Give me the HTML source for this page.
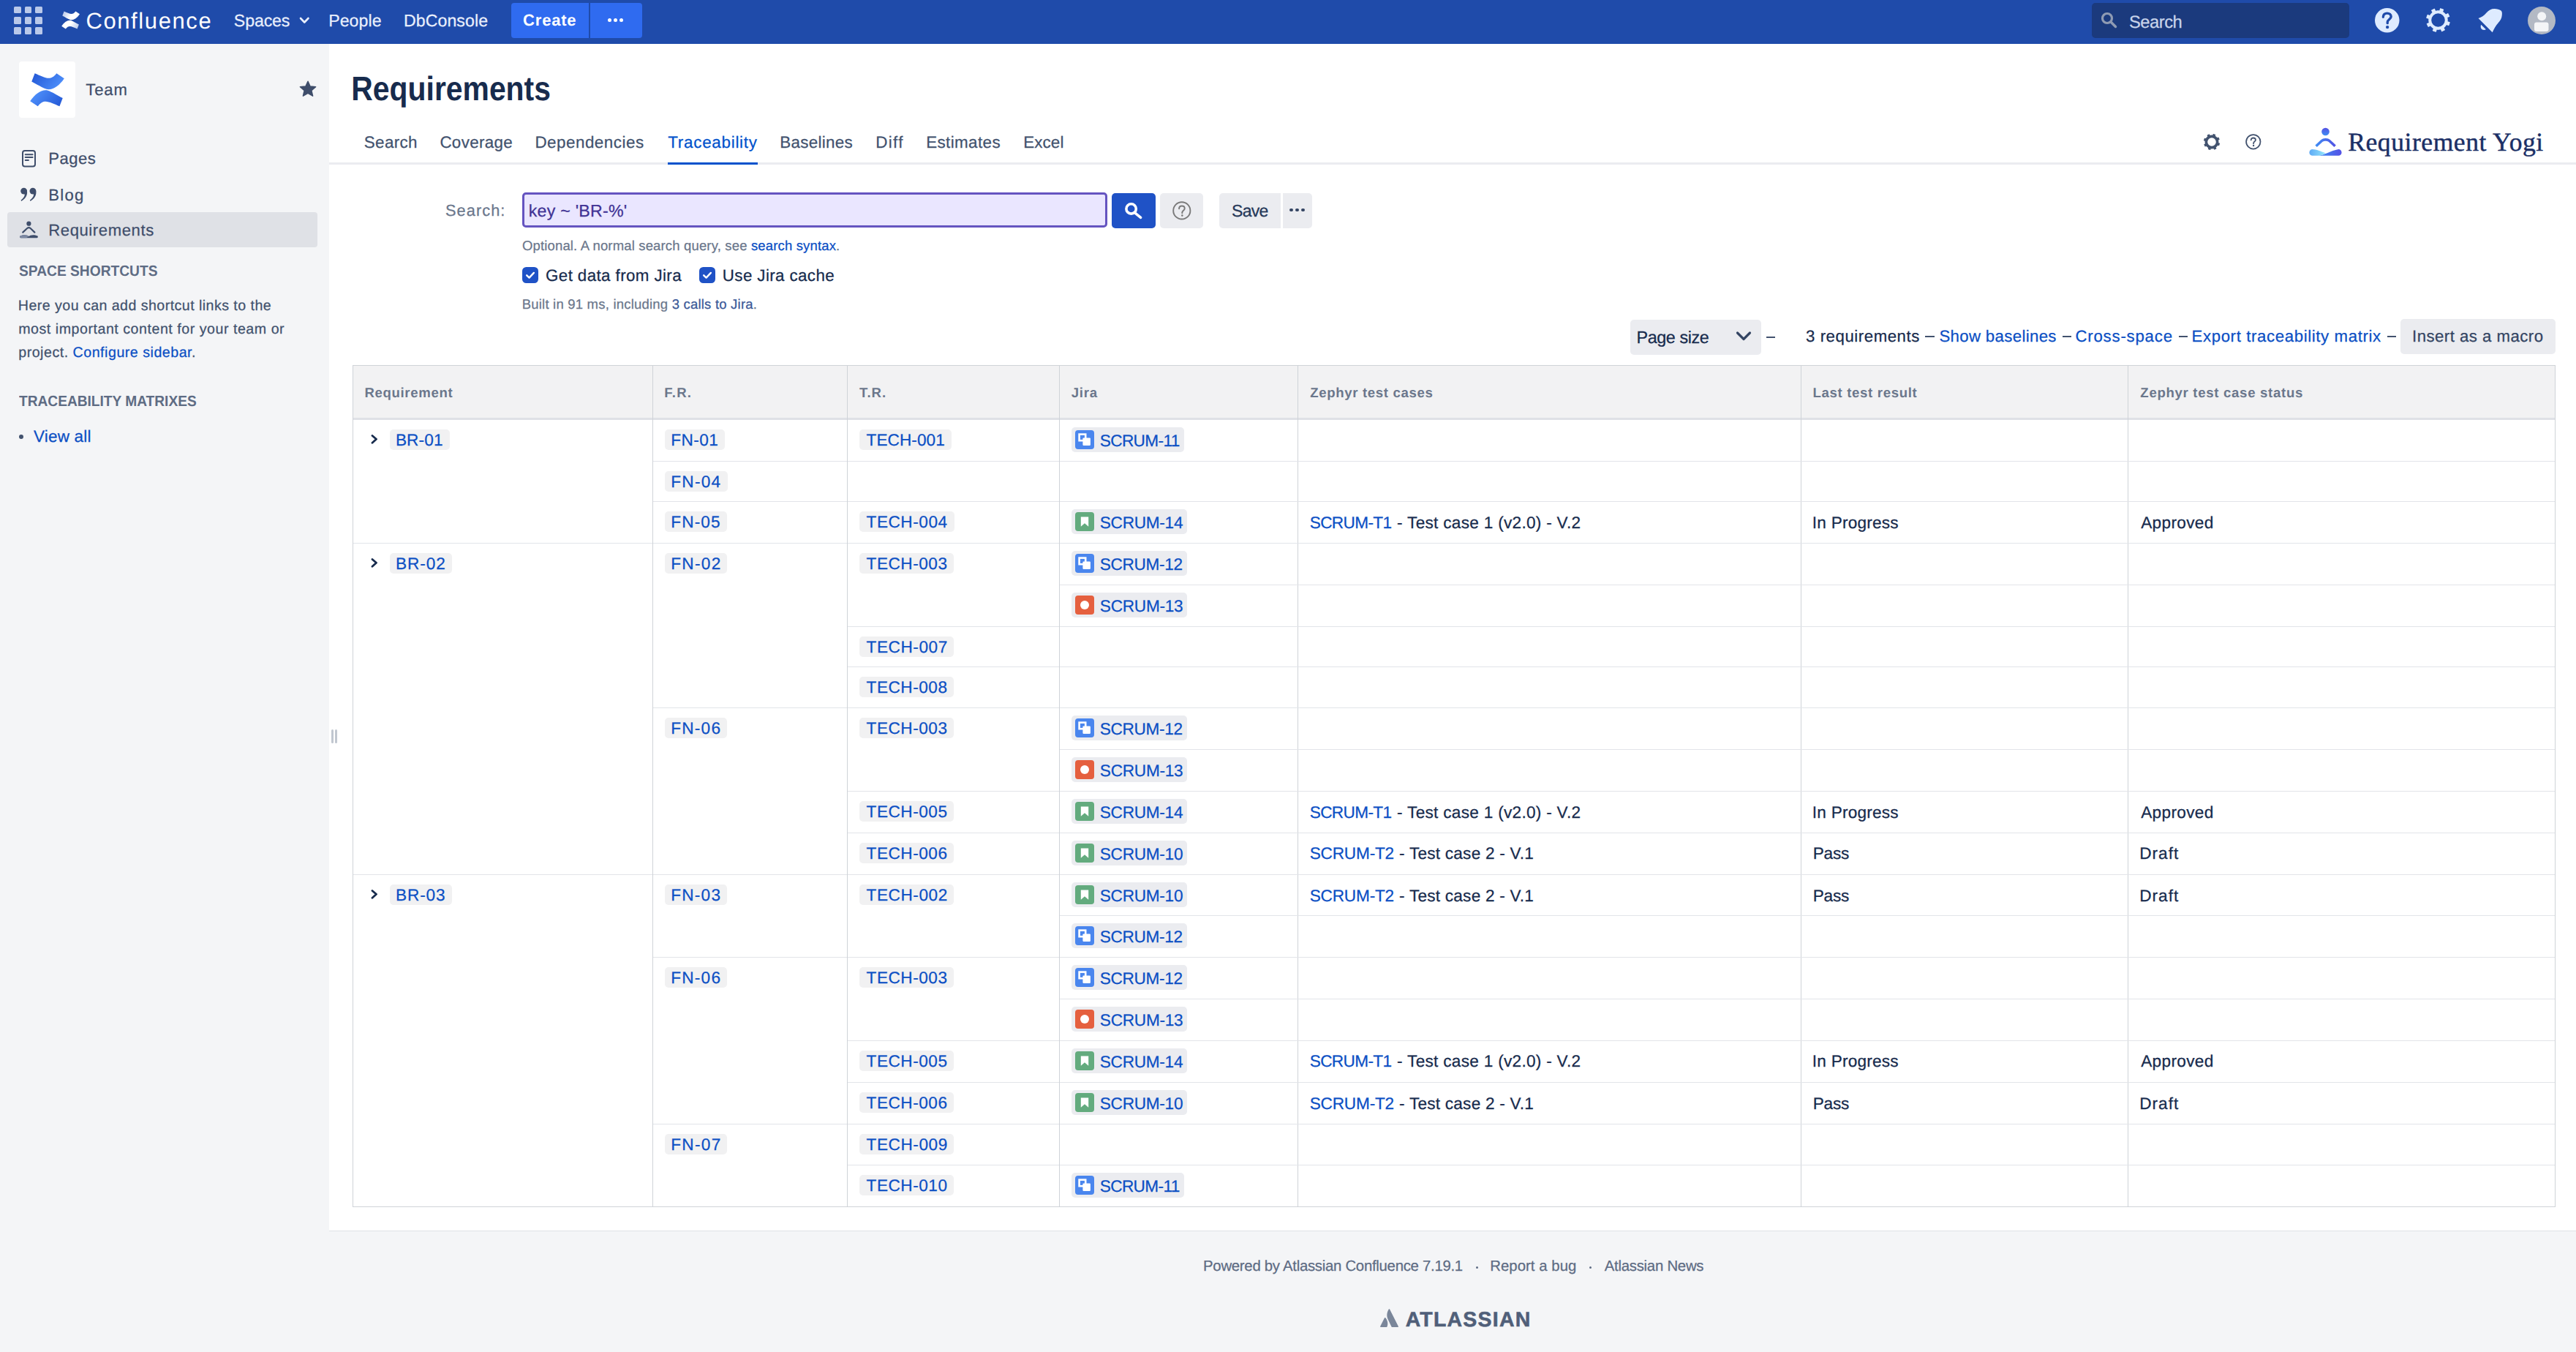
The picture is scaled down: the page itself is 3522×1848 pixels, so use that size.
<!DOCTYPE html><html><head><meta charset="utf-8"><style>
html,body{margin:0;padding:0;}
body{width:3522px;height:1848px;position:relative;overflow:hidden;background:#F4F5F7;}
.t{position:absolute;white-space:pre;text-rendering:geometricPrecision;}
.w4{-webkit-text-stroke:0.25px currentColor;}
.r{position:absolute;}
.s{position:absolute;overflow:visible;}
</style></head><body><div class="r" style="left:0px;top:0px;width:3522px;height:60px;background:#1F4BAA;border-radius:0px;"></div><div class="r" style="left:19.3px;top:8.6px;width:9.7px;height:9.699999999999998px;background:#B9C8EA;border-radius:1.5px;"></div><div class="r" style="left:19.3px;top:22.95px;width:9.7px;height:9.7px;background:#B9C8EA;border-radius:1.5px;"></div><div class="r" style="left:19.3px;top:37.3px;width:9.7px;height:9.700000000000003px;background:#B9C8EA;border-radius:1.5px;"></div><div class="r" style="left:33.7px;top:8.6px;width:9.700000000000003px;height:9.699999999999998px;background:#B9C8EA;border-radius:1.5px;"></div><div class="r" style="left:33.7px;top:22.95px;width:9.700000000000003px;height:9.7px;background:#B9C8EA;border-radius:1.5px;"></div><div class="r" style="left:33.7px;top:37.3px;width:9.700000000000003px;height:9.700000000000003px;background:#B9C8EA;border-radius:1.5px;"></div><div class="r" style="left:48.1px;top:8.6px;width:9.699999999999996px;height:9.699999999999998px;background:#B9C8EA;border-radius:1.5px;"></div><div class="r" style="left:48.1px;top:22.95px;width:9.699999999999996px;height:9.7px;background:#B9C8EA;border-radius:1.5px;"></div><div class="r" style="left:48.1px;top:37.3px;width:9.699999999999996px;height:9.700000000000003px;background:#B9C8EA;border-radius:1.5px;"></div><svg class="s" style="left:83.8px;top:14.9px;" width="25.2" height="25" viewBox="0 0 25 25"><defs><linearGradient id="lgw1" x1="0" y1="0" x2="1" y2="0.3"><stop offset="0" stop-color="#AFC0E6"/><stop offset="0.6" stop-color="#fff"/></linearGradient><linearGradient id="lgw2" x1="1" y1="1" x2="0" y2="0.7"><stop offset="0" stop-color="#AFC0E6"/><stop offset="0.6" stop-color="#fff"/></linearGradient></defs><path d="M3.5,0.5 L1.2,6.5 C5,8.5 9,11 12,12 C16,13 21,10 24.9,4.2 L19.3,0.5 C17.5,3 15.5,4 13.7,4 C11,4 7,2 3.5,0.5 Z" fill="url(#lgw1)"/><path d="M3.5,0.5 L1.2,6.5 C5,8.5 9,11 12,12 C16,13 21,10 24.9,4.2 L19.3,0.5 C17.5,3 15.5,4 13.7,4 C11,4 7,2 3.5,0.5 Z" fill="url(#lgw1)" transform="rotate(180 12.5 12.5)"/></svg><div class="t w4" style="left:117.45px;top:9px;font:400 30.94px/40px 'Liberation Sans';letter-spacing:1.627px;color:#FFFFFF;-webkit-text-stroke:0;">Confluence</div><div class="t w4" style="left:319.83px;top:13px;font:400 23.12px/30px 'Liberation Sans';letter-spacing:-0.096px;color:#E9EFFC;">Spaces</div><svg class="s" style="left:408.5px;top:22.5px;" width="14.5" height="10" viewBox="0 0 14.5 10"><path d="M2,2 L7.25,7.5 L12.5,2" fill="none" stroke="#E9EFFC" stroke-width="2.6" stroke-linecap="round" stroke-linejoin="round"/></svg><div class="t w4" style="left:449.15px;top:13px;font:400 23.12px/30px 'Liberation Sans';letter-spacing:0.092px;color:#E9EFFC;">People</div><div class="t w4" style="left:551.90px;top:13px;font:400 23.12px/30px 'Liberation Sans';letter-spacing:0.103px;color:#E9EFFC;">DbConsole</div><div class="r" style="left:699px;top:4px;width:179px;height:48px;background:#2F6BF0;border-radius:4px;"></div><div class="r" style="left:805px;top:4px;width:2px;height:48px;background:#1F4BAA;border-radius:0px;"></div><div class="t" style="left:715.12px;top:13px;font:700 22.05px/29px 'Liberation Sans';letter-spacing:0.765px;color:#FFFFFF;">Create</div><div class="r" style="left:831.0px;top:25px;width:5.0px;height:5px;background:#fff;border-radius:3px;"></div><div class="r" style="left:839.0px;top:25px;width:5.0px;height:5px;background:#fff;border-radius:3px;"></div><div class="r" style="left:847.0px;top:25px;width:5.0px;height:5px;background:#fff;border-radius:3px;"></div><div class="r" style="left:2860px;top:4px;width:352px;height:48px;background:#1B3A7D;border-radius:5px;"></div><svg class="s" style="left:2872px;top:16px;" width="24" height="23" viewBox="0 0 24 23"><circle cx="9" cy="9" r="6.5" fill="none" stroke="#8F9BB3" stroke-width="3.2"/><path d="M14,14 L20.5,20.5" stroke="#8F9BB3" stroke-width="3.4" stroke-linecap="round"/></svg><div class="t w4" style="left:2911.05px;top:15px;font:400 23.76px/31px 'Liberation Sans';letter-spacing:-0.517px;color:#C9D4EA;">Search</div><svg class="s" style="left:3246.9px;top:10.9px;" width="33.5" height="33.5" viewBox="0 0 34 34"><circle cx="17" cy="17" r="17" fill="#DEEBFF"/><path d="M11.5,12.5 C11.5,8.8 14,7.2 17,7.2 C20,7.2 22.5,9 22.5,12 C22.5,15.5 17.5,16 17.5,19.5 L17.5,21" fill="none" stroke="#1F4BAA" stroke-width="3.4" stroke-linecap="round"/><circle cx="17.4" cy="26.5" r="2.2" fill="#1F4BAA"/></svg><svg class="s" style="left:3317.2px;top:11.3px;" width="33" height="33" viewBox="-16.5 -16.5 33 33"><path d="M2.71,-16.28 L3.24,-16.18 L3.77,-16.06 L4.29,-15.93 L4.81,-15.78 L5.32,-15.62 L5.83,-15.43 L6.33,-15.24 L6.83,-15.02 L7.32,-14.79 L7.80,-14.54 L6.61,-11.42 L6.99,-11.20 L7.35,-10.97 L7.70,-10.72 L8.05,-10.46 L8.39,-10.19 L8.72,-9.91 L9.04,-9.62 L9.35,-9.32 L9.65,-9.01 L9.94,-8.69 L10.21,-8.36 L10.48,-8.02 L13.42,-9.59 L13.73,-9.15 L14.02,-8.69 L14.30,-8.23 L14.56,-7.76 L14.81,-7.28 L15.04,-6.79 L15.25,-6.29 L15.45,-5.79 L15.63,-5.28 L15.80,-4.77 L12.75,-3.40 L12.86,-2.98 L12.95,-2.56 L13.03,-2.13 L13.09,-1.71 L13.14,-1.28 L13.17,-0.85 L13.19,-0.41 L13.20,0.02 L13.19,0.45 L13.17,0.88 L13.13,1.31 L13.08,1.74 L16.28,2.71 L16.18,3.24 L16.06,3.77 L15.93,4.29 L15.78,4.81 L15.62,5.32 L15.43,5.83 L15.24,6.33 L15.02,6.83 L14.79,7.32 L14.54,7.80 L11.42,6.61 L11.20,6.99 L10.97,7.35 L10.72,7.70 L10.46,8.05 L10.19,8.39 L9.91,8.72 L9.62,9.04 L9.32,9.35 L9.01,9.65 L8.69,9.94 L8.36,10.21 L8.02,10.48 L9.59,13.42 L9.15,13.73 L8.69,14.02 L8.23,14.30 L7.76,14.56 L7.28,14.81 L6.79,15.04 L6.29,15.25 L5.79,15.45 L5.28,15.63 L4.77,15.80 L3.40,12.75 L2.98,12.86 L2.56,12.95 L2.13,13.03 L1.71,13.09 L1.28,13.14 L0.85,13.17 L0.41,13.19 L-0.02,13.20 L-0.45,13.19 L-0.88,13.17 L-1.31,13.13 L-1.74,13.08 L-2.71,16.28 L-3.24,16.18 L-3.77,16.06 L-4.29,15.93 L-4.81,15.78 L-5.32,15.62 L-5.83,15.43 L-6.33,15.24 L-6.83,15.02 L-7.32,14.79 L-7.80,14.54 L-6.61,11.42 L-6.99,11.20 L-7.35,10.97 L-7.70,10.72 L-8.05,10.46 L-8.39,10.19 L-8.72,9.91 L-9.04,9.62 L-9.35,9.32 L-9.65,9.01 L-9.94,8.69 L-10.21,8.36 L-10.48,8.02 L-13.42,9.59 L-13.73,9.15 L-14.02,8.69 L-14.30,8.23 L-14.56,7.76 L-14.81,7.28 L-15.04,6.79 L-15.25,6.29 L-15.45,5.79 L-15.63,5.28 L-15.80,4.77 L-12.75,3.40 L-12.86,2.98 L-12.95,2.56 L-13.03,2.13 L-13.09,1.71 L-13.14,1.28 L-13.17,0.85 L-13.19,0.41 L-13.20,-0.02 L-13.19,-0.45 L-13.17,-0.88 L-13.13,-1.31 L-13.08,-1.74 L-16.28,-2.71 L-16.18,-3.24 L-16.06,-3.77 L-15.93,-4.29 L-15.78,-4.81 L-15.62,-5.32 L-15.43,-5.83 L-15.24,-6.33 L-15.02,-6.83 L-14.79,-7.32 L-14.54,-7.80 L-11.42,-6.61 L-11.20,-6.99 L-10.97,-7.35 L-10.72,-7.70 L-10.46,-8.05 L-10.19,-8.39 L-9.91,-8.72 L-9.62,-9.04 L-9.32,-9.35 L-9.01,-9.65 L-8.69,-9.94 L-8.36,-10.21 L-8.02,-10.48 L-9.59,-13.42 L-9.15,-13.73 L-8.69,-14.02 L-8.23,-14.30 L-7.76,-14.56 L-7.28,-14.81 L-6.79,-15.04 L-6.29,-15.25 L-5.79,-15.45 L-5.28,-15.63 L-4.77,-15.80 L-3.40,-12.75 L-2.98,-12.86 L-2.56,-12.95 L-2.13,-13.03 L-1.71,-13.09 L-1.28,-13.14 L-0.85,-13.17 L-0.41,-13.19 L0.02,-13.20 L0.45,-13.19 L0.88,-13.17 L1.31,-13.13 L1.74,-13.08 Z M9.3,0 A9.3,9.3 0 1,0 -9.3,0 A9.3,9.3 0 1,0 9.3,0 Z" fill="#DEEBFF" fill-rule="evenodd"/></svg><svg class="s" style="left:3387.9px;top:11.6px;" width="33" height="33" viewBox="0 0 33 33"><path d="M0.5,13.1 C5,11.5 8,9.5 11.5,5.5 C14.5,2 18,0 22.5,0 C26,0 29.5,1 31.5,2.5 C33,4 33,5.5 32.8,8.6 C32.5,13 30.5,16.5 27.5,19.5 C24.5,23 21.5,28 19.7,32.3 Z" fill="#DEEBFF"/><path d="M4.2,21.8 L10.9,28.3 C8.5,29.6 5.5,29 4.3,27 C3.5,25.5 3.5,23.5 4.2,21.8 Z" fill="#DEEBFF"/></svg><svg class="s" style="left:3456px;top:8.9px;" width="38" height="38" viewBox="0 0 38 38"><circle cx="19" cy="19" r="19" fill="#B3B9C4"/><circle cx="19.2" cy="13.3" r="6" fill="#F4F5F7"/><rect x="9" y="21.4" width="19.5" height="12.6" rx="3" fill="#F4F5F7"/></svg><div class="r" style="left:26px;top:84px;width:77px;height:77px;background:#FFFFFF;border-radius:4px;"></div><svg class="s" style="left:41px;top:98.7px;" width="47" height="47.5" viewBox="0 0 25 25"><defs><linearGradient id="lgb1" x1="0" y1="0" x2="1" y2="0.4"><stop offset="0" stop-color="#2256D4"/><stop offset="1" stop-color="#4C8DF9"/></linearGradient><linearGradient id="lgb2" x1="1" y1="1" x2="0" y2="0.6"><stop offset="0" stop-color="#2256D4"/><stop offset="1" stop-color="#4C8DF9"/></linearGradient></defs><path d="M3.5,0.5 L1.2,6.5 C5,8.5 9,11 12,12 C16,13 21,10 24.9,4.2 L19.3,0.5 C17.5,3 15.5,4 13.7,4 C11,4 7,2 3.5,0.5 Z" fill="url(#lgb1)"/><path d="M3.5,0.5 L1.2,6.5 C5,8.5 9,11 12,12 C16,13 21,10 24.9,4.2 L19.3,0.5 C17.5,3 15.5,4 13.7,4 C11,4 7,2 3.5,0.5 Z" fill="url(#lgb1)" transform="rotate(180 12.5 12.5)"/></svg><div class="t w4" style="left:117.31px;top:108px;font:400 22.05px/29px 'Liberation Sans';letter-spacing:0.888px;color:#3F4E6B;">Team</div><svg class="s" style="left:409px;top:110px;" width="24" height="24" viewBox="0 0 24 24"><path d="M12,1.2 L15.1,8.1 L22.6,8.8 L16.9,13.8 L18.6,21.2 L12,17.3 L5.4,21.2 L7.1,13.8 L1.4,8.8 L8.9,8.1 Z" fill="#3F4E6B" stroke="#3F4E6B" stroke-width="1.5" stroke-linejoin="round"/></svg><svg class="s" style="left:29.8px;top:205.4px;" width="19" height="23.5" viewBox="0 0 19 23.5"><rect x="1" y="1" width="17" height="21.5" rx="3" fill="none" stroke="#3F4E6B" stroke-width="2"/><path d="M4.7,6.2 H14.6 M4.7,10 H14.6 M4.7,14 H8.9" stroke="#3F4E6B" stroke-width="2" stroke-linecap="round"/></svg><div class="t w4" style="left:66.24px;top:202px;font:400 22.05px/29px 'Liberation Sans';letter-spacing:0.477px;color:#3F4E6B;">Pages</div><svg class="s" style="left:27.5px;top:256px;" width="23.5" height="19.5" viewBox="0 0 23.5 19.5"><g fill="#3F4E6B"><circle cx="4.6" cy="5.1" r="4.4"/><path d="M7.8,2.6 C10.5,6.5 9.5,14.5 1.2,19 L0.6,17.6 C5.5,14 6.5,10 5.2,8.5 Z"/><circle cx="16.9" cy="5.1" r="4.4"/><path d="M20.1,2.6 C22.8,6.5 21.8,14.5 13.5,19 L12.9,17.6 C17.8,14 18.8,10 17.5,8.5 Z"/></g></svg><div class="t w4" style="left:66.24px;top:252px;font:400 22.05px/29px 'Liberation Sans';letter-spacing:1.291px;color:#3F4E6B;">Blog</div><div class="r" style="left:10px;top:290px;width:424px;height:48px;background:#DFE1E6;border-radius:4px;"></div><svg class="s" style="left:25.5px;top:302px;" width="27" height="25" viewBox="0 0 27 25"><circle cx="13.4" cy="3.7" r="3.1" fill="#3F4E6B"/><path d="M5.2,15.6 L11.2,10 C12.5,8.9 14.3,8.9 15.6,10 L21.4,15.6" fill="none" stroke="#3F4E6B" stroke-width="2.2" stroke-linecap="round"/><path d="M1.5,20.5 C8,18 12,20 13.3,21 C15,20 19,18 25.5,20.5 C26.3,21.8 25.5,23.3 24.5,23.3 L2.5,23.3 C1.4,23.3 0.6,21.8 1.5,20.5 Z" fill="#3F4E6B"/><path d="M1.5,20.5 C8,18 12,20 13.3,21 L10,23.3 L2.5,23.3 C1.4,23.3 0.6,21.8 1.5,20.5 Z" fill="#7C88A2"/></svg><div class="t w4" style="left:66.24px;top:300px;font:400 22.05px/29px 'Liberation Sans';letter-spacing:0.607px;color:#3F4E6B;">Requirements</div><div class="t" style="left:25.99px;top:358px;font:700 20.34px/26px 'Liberation Sans';letter-spacing:0.000px;color:#5E6C84;transform:scaleX(0.9442);transform-origin:0.41px 0;">SPACE SHORTCUTS</div><div class="t w4" style="left:24.83px;top:405px;font:400 19.63px/26px 'Liberation Sans';letter-spacing:0.450px;color:#42526E;">Here you can add shortcut links to the</div><div class="t w4" style="left:25.22px;top:437px;font:400 19.63px/26px 'Liberation Sans';letter-spacing:0.528px;color:#42526E;">most important content for your team or</div><div class="t w4" style="left:25.22px;top:469px;font:400 19.63px/26px 'Liberation Sans';letter-spacing:0.514px;color:#42526E;"><span style="color:#42526E">project. </span><span style="color:#0B4FC4">Configure sidebar</span><span style="color:#42526E">.</span></div><div class="t" style="left:26.20px;top:536px;font:700 20.34px/26px 'Liberation Sans';letter-spacing:0.000px;color:#5E6C84;transform:scaleX(0.9411);transform-origin:0.20px 0;">TRACEABILITY MATRIXES</div><div class="r" style="left:26px;top:594px;width:6px;height:6px;background:#42526E;border-radius:3px;"></div><div class="t w4" style="left:45.90px;top:582px;font:400 22.48px/29px 'Liberation Sans';letter-spacing:0.223px;color:#0B4FC4;">View all</div><div class="r" style="left:453px;top:997px;width:3px;height:19px;background:#C1C7D0;border-radius:2px;"></div><div class="r" style="left:458px;top:997px;width:3px;height:19px;background:#C1C7D0;border-radius:2px;"></div><div class="r" style="left:450px;top:60px;width:3072px;height:1622px;background:#FFFFFF;border-radius:0px;"></div><div class="r" style="left:450px;top:1682px;width:3072px;height:1px;background:#DFE1E6;border-radius:0px;"></div><div class="t" style="left:480.47px;top:91px;font:700 46.37px/60px 'Liberation Sans';letter-spacing:0.000px;color:#172B4D;transform:scaleX(0.8818);transform-origin:2.78px 0;">Requirements</div><div class="t w4" style="left:497.85px;top:180px;font:400 22.40px/29px 'Liberation Sans';letter-spacing:0.334px;color:#42526E;">Search</div><div class="t w4" style="left:601.38px;top:180px;font:400 22.40px/29px 'Liberation Sans';letter-spacing:0.327px;color:#42526E;">Coverage</div><div class="t w4" style="left:731.46px;top:180px;font:400 22.40px/29px 'Liberation Sans';letter-spacing:0.498px;color:#42526E;">Dependencies</div><div class="t w4" style="left:913.30px;top:180px;font:400 22.40px/29px 'Liberation Sans';letter-spacing:0.726px;color:#0052CC;">Traceability</div><div class="t w4" style="left:1066.21px;top:180px;font:400 22.40px/29px 'Liberation Sans';letter-spacing:0.290px;color:#42526E;">Baselines</div><div class="t w4" style="left:1197.21px;top:180px;font:400 22.40px/29px 'Liberation Sans';letter-spacing:1.348px;color:#42526E;">Diff</div><div class="t w4" style="left:1266.21px;top:180px;font:400 22.40px/29px 'Liberation Sans';letter-spacing:0.388px;color:#42526E;">Estimates</div><div class="t w4" style="left:1399.21px;top:180px;font:400 22.40px/29px 'Liberation Sans';letter-spacing:0.100px;color:#42526E;">Excel</div><div class="r" style="left:450px;top:222px;width:3072px;height:3px;background:#EBECF0;border-radius:0px;"></div><div class="r" style="left:913px;top:222px;width:123px;height:3px;background:#0052CC;border-radius:0px;"></div><svg class="s" style="left:3012.6px;top:183px;" width="22" height="22" viewBox="-11 -11 22 22"><path d="M1.84,-11.05 L2.20,-10.98 L2.56,-10.90 L2.91,-10.81 L3.27,-10.71 L3.61,-10.60 L3.96,-10.48 L4.30,-10.34 L4.64,-10.20 L4.97,-10.04 L5.29,-9.87 L4.71,-8.13 L4.97,-7.98 L5.23,-7.81 L5.49,-7.63 L5.73,-7.45 L5.97,-7.26 L6.21,-7.06 L6.43,-6.85 L6.66,-6.64 L6.87,-6.42 L7.08,-6.19 L7.27,-5.95 L7.47,-5.71 L9.11,-6.51 L9.32,-6.21 L9.52,-5.90 L9.71,-5.59 L9.88,-5.27 L10.05,-4.94 L10.21,-4.61 L10.35,-4.27 L10.49,-3.93 L10.61,-3.59 L10.72,-3.24 L9.08,-2.42 L9.16,-2.12 L9.22,-1.82 L9.28,-1.52 L9.32,-1.21 L9.36,-0.91 L9.38,-0.60 L9.40,-0.30 L9.40,0.01 L9.39,0.32 L9.38,0.63 L9.35,0.93 L9.32,1.24 L11.05,1.84 L10.98,2.20 L10.90,2.56 L10.81,2.91 L10.71,3.27 L10.60,3.61 L10.48,3.96 L10.34,4.30 L10.20,4.64 L10.04,4.97 L9.87,5.29 L8.13,4.71 L7.98,4.97 L7.81,5.23 L7.63,5.49 L7.45,5.73 L7.26,5.97 L7.06,6.21 L6.85,6.43 L6.64,6.66 L6.42,6.87 L6.19,7.08 L5.95,7.27 L5.71,7.47 L6.51,9.11 L6.21,9.32 L5.90,9.52 L5.59,9.71 L5.27,9.88 L4.94,10.05 L4.61,10.21 L4.27,10.35 L3.93,10.49 L3.59,10.61 L3.24,10.72 L2.42,9.08 L2.12,9.16 L1.82,9.22 L1.52,9.28 L1.21,9.32 L0.91,9.36 L0.60,9.38 L0.30,9.40 L-0.01,9.40 L-0.32,9.39 L-0.63,9.38 L-0.93,9.35 L-1.24,9.32 L-1.84,11.05 L-2.20,10.98 L-2.56,10.90 L-2.91,10.81 L-3.27,10.71 L-3.61,10.60 L-3.96,10.48 L-4.30,10.34 L-4.64,10.20 L-4.97,10.04 L-5.29,9.87 L-4.71,8.13 L-4.97,7.98 L-5.23,7.81 L-5.49,7.63 L-5.73,7.45 L-5.97,7.26 L-6.21,7.06 L-6.43,6.85 L-6.66,6.64 L-6.87,6.42 L-7.08,6.19 L-7.27,5.95 L-7.47,5.71 L-9.11,6.51 L-9.32,6.21 L-9.52,5.90 L-9.71,5.59 L-9.88,5.27 L-10.05,4.94 L-10.21,4.61 L-10.35,4.27 L-10.49,3.93 L-10.61,3.59 L-10.72,3.24 L-9.08,2.42 L-9.16,2.12 L-9.22,1.82 L-9.28,1.52 L-9.32,1.21 L-9.36,0.91 L-9.38,0.60 L-9.40,0.30 L-9.40,-0.01 L-9.39,-0.32 L-9.38,-0.63 L-9.35,-0.93 L-9.32,-1.24 L-11.05,-1.84 L-10.98,-2.20 L-10.90,-2.56 L-10.81,-2.91 L-10.71,-3.27 L-10.60,-3.61 L-10.48,-3.96 L-10.34,-4.30 L-10.20,-4.64 L-10.04,-4.97 L-9.87,-5.29 L-8.13,-4.71 L-7.98,-4.97 L-7.81,-5.23 L-7.63,-5.49 L-7.45,-5.73 L-7.26,-5.97 L-7.06,-6.21 L-6.85,-6.43 L-6.64,-6.66 L-6.42,-6.87 L-6.19,-7.08 L-5.95,-7.27 L-5.71,-7.47 L-6.51,-9.11 L-6.21,-9.32 L-5.90,-9.52 L-5.59,-9.71 L-5.27,-9.88 L-4.94,-10.05 L-4.61,-10.21 L-4.27,-10.35 L-3.93,-10.49 L-3.59,-10.61 L-3.24,-10.72 L-2.42,-9.08 L-2.12,-9.16 L-1.82,-9.22 L-1.52,-9.28 L-1.21,-9.32 L-0.91,-9.36 L-0.60,-9.38 L-0.30,-9.40 L0.01,-9.40 L0.32,-9.39 L0.63,-9.38 L0.93,-9.35 L1.24,-9.32 Z M5.8,0 A5.8,5.8 0 1,0 -5.8,0 A5.8,5.8 0 1,0 5.8,0 Z" fill="#42526E" fill-rule="evenodd"/></svg><svg class="s" style="left:3070.3px;top:183.2px;" width="21.6" height="21.6" viewBox="0 0 22 22"><circle cx="11" cy="11" r="9.9" fill="none" stroke="#42526E" stroke-width="1.8"/><path d="M7.8,8.6 C7.8,6.6 9.3,5.6 11,5.6 C12.8,5.6 14.2,6.7 14.2,8.4 C14.2,10.5 11.3,10.8 11.3,13 L11.3,13.6" fill="none" stroke="#42526E" stroke-width="1.8" stroke-linecap="round"/><circle cx="11.3" cy="16.3" r="1.2" fill="#42526E"/></svg><svg class="s" style="left:3157px;top:174px;" width="45" height="40" viewBox="0 0 45 40"><defs><linearGradient id="ryl" x1="0" y1="0" x2="1" y2="0"><stop offset="0" stop-color="#5FAAF5"/><stop offset="1" stop-color="#92E6FB"/></linearGradient><linearGradient id="ryr" x1="0" y1="0" x2="1" y2="0"><stop offset="0" stop-color="#3A8EF3"/><stop offset="1" stop-color="#5551E6"/></linearGradient><linearGradient id="rya" x1="0" y1="0" x2="1" y2="0"><stop offset="0" stop-color="#3F8BF3"/><stop offset="1" stop-color="#5153E4"/></linearGradient><linearGradient id="ryh" x1="0" y1="0" x2="0" y2="1"><stop offset="0" stop-color="#5650E3"/><stop offset="1" stop-color="#3E8FF4"/></linearGradient></defs><circle cx="22.5" cy="6" r="5.3" fill="url(#ryh)"/><path d="M9.6,25.8 L17.6,18.3 C19.4,16.8 20.8,16.9 22.6,16.9 C24.4,16.9 25.8,16.8 27.6,18.3 L35.6,25.8" fill="none" stroke="url(#rya)" stroke-width="3.6"/><path d="M40.2,30.1 A4.35,4.35 0 0 1 40.2,38.8 L12.9,38.8 C20,38.5 30,32 40.2,30.1 Z" fill="url(#ryr)"/><path d="M4.7,30.1 C10,30.1 16,33 22.5,35.2 C19.5,36.8 16,38.8 12.5,38.8 L4.7,38.8 A4.35,4.35 0 0 1 4.7,30.1 Z" fill="url(#ryl)"/></svg><div class="t w4" style="left:3210.29px;top:171px;font:400 35.57px/46px 'Liberation Serif';letter-spacing:0.542px;color:#1B2F66;-webkit-text-stroke:0.45px currentColor;">Requirement Yogi</div><div class="t w4" style="left:609.03px;top:274px;font:400 21.76px/28px 'Liberation Sans';letter-spacing:1.063px;color:#6B778C;">Search:</div><div class="r" style="left:714px;top:263px;width:800px;height:48px;background:#EAE6FF;border-radius:5px;box-sizing:border-box;border:3px solid #6554C0;"></div><div class="t w4" style="left:722.81px;top:273px;font:400 23.19px/30px 'Liberation Sans';letter-spacing:0.221px;color:#403294;">key ~ 'BR-%'</div><div class="r" style="left:1520px;top:264px;width:60px;height:48px;background:#1F52C6;border-radius:5px;"></div><svg class="s" style="left:1535px;top:274px;" width="28" height="28" viewBox="0 0 28 28"><circle cx="11.6" cy="11.4" r="6.7" fill="none" stroke="#fff" stroke-width="3.6"/><path d="M16.6,16.8 L24.6,23.4" stroke="#fff" stroke-width="3.6" stroke-linecap="round"/></svg><div class="r" style="left:1586px;top:264px;width:59px;height:48px;background:#EBECF0;border-radius:5px;"></div><svg class="s" style="left:1602.5px;top:275px;" width="26" height="26" viewBox="0 0 26 26"><circle cx="12.8" cy="12.9" r="11.6" fill="none" stroke="#7A7A7A" stroke-width="1.9"/><path d="M9.1,10.2 C9.1,7.7 10.9,6.5 12.9,6.5 C15,6.5 16.7,7.8 16.7,9.9 C16.7,12.5 13.3,12.8 13.3,15.4 L13.3,16.3" fill="none" stroke="#7A7A7A" stroke-width="2" stroke-linecap="round"/><circle cx="13.3" cy="19.6" r="1.3" fill="#7A7A7A"/></svg><div class="r" style="left:1667px;top:264px;width:84px;height:48px;background:#EBECF0;border-radius:5px;border-top-right-radius:0;border-bottom-right-radius:0;"></div><div class="r" style="left:1754px;top:264px;width:40px;height:48px;background:#EBECF0;border-radius:5px;border-top-left-radius:0;border-bottom-left-radius:0;"></div><div class="t w4" style="left:1684.08px;top:273px;font:400 23.04px/30px 'Liberation Sans';letter-spacing:-0.756px;color:#253858;">Save</div><div class="r" style="left:1762.8px;top:284.6px;width:4.800000000000182px;height:4.7999999999999545px;background:#344563;border-radius:3px;"></div><div class="r" style="left:1770.8999999999999px;top:284.6px;width:4.800000000000182px;height:4.7999999999999545px;background:#344563;border-radius:3px;"></div><div class="r" style="left:1779.0px;top:284.6px;width:4.800000000000182px;height:4.7999999999999545px;background:#344563;border-radius:3px;"></div><div class="t w4" style="left:713.96px;top:324px;font:400 18.49px/24px 'Liberation Sans';letter-spacing:0.164px;color:#6B778C;"><span style="color:#6B778C">Optional. A normal search query, see </span><span style="color:#0B4FC4">search syntax</span><span style="color:#6B778C">.</span></div><svg class="s" style="left:714.3px;top:365px;" width="22" height="22" viewBox="0 0 22 22"><rect x="0" y="0" width="22" height="22" rx="5.5" fill="#1F52C6"/><path d="M6.2,11.3 L9.6,14.6 L15.9,7.9" fill="none" stroke="#fff" stroke-width="2.4" stroke-linecap="round" stroke-linejoin="round"/></svg><div class="t w4" style="left:746.08px;top:362px;font:400 22.33px/29px 'Liberation Sans';letter-spacing:0.400px;color:#172B4D;">Get data from Jira</div><svg class="s" style="left:955.8px;top:365px;" width="22" height="22" viewBox="0 0 22 22"><rect x="0" y="0" width="22" height="22" rx="5.5" fill="#1F52C6"/><path d="M6.2,11.3 L9.6,14.6 L15.9,7.9" fill="none" stroke="#fff" stroke-width="2.4" stroke-linecap="round" stroke-linejoin="round"/></svg><div class="t w4" style="left:987.84px;top:362px;font:400 22.33px/29px 'Liberation Sans';letter-spacing:0.397px;color:#172B4D;">Use Jira cache</div><div class="t w4" style="left:713.72px;top:404px;font:400 18.49px/24px 'Liberation Sans';letter-spacing:0.216px;color:#6B778C;"><span style="color:#6B778C">Built in 91 ms, including </span><span style="color:#3B5998">3 calls to Jira</span><span style="color:#6B778C">.</span></div><div class="r" style="left:2229px;top:437px;width:179px;height:48px;background:#EBECF0;border-radius:5px;"></div><div class="t w4" style="left:2237.53px;top:446px;font:400 23.33px/30px 'Liberation Sans';letter-spacing:-0.393px;color:#172B4D;">Page size</div><svg class="s" style="left:2372px;top:452px;" width="24" height="16" viewBox="0 0 24 16"><path d="M3.5,3 L12,11.5 L20.5,3" fill="none" stroke="#344563" stroke-width="3.2" stroke-linecap="round" stroke-linejoin="round"/></svg><div class="r" style="left:2414.5px;top:459.5px;width:12.0px;height:2.0px;background:#42526E;border-radius:0px;"></div><div class="t w4" style="left:2469.03px;top:445px;font:400 22.19px/29px 'Liberation Sans';letter-spacing:0.563px;color:#172B4D;">3 requirements</div><div class="r" style="left:2632.4px;top:458.5px;width:12.400000000000091px;height:2.0px;background:#42526E;border-radius:0px;"></div><div class="r" style="left:2820px;top:458.5px;width:12px;height:2.0px;background:#42526E;border-radius:0px;"></div><div class="r" style="left:2978.7px;top:458.5px;width:11.900000000000091px;height:2.0px;background:#42526E;border-radius:0px;"></div><div class="r" style="left:3264px;top:458.5px;width:11.800000000000182px;height:2.0px;background:#42526E;border-radius:0px;"></div><div class="t w4" style="left:2651.41px;top:445px;font:400 22.19px/29px 'Liberation Sans';letter-spacing:0.356px;color:#0B4FC4;">Show baselines</div><div class="t w4" style="left:2837.49px;top:445px;font:400 22.19px/29px 'Liberation Sans';letter-spacing:0.796px;color:#0B4FC4;">Cross-space</div><div class="t w4" style="left:2996.52px;top:445px;font:400 22.19px/29px 'Liberation Sans';letter-spacing:0.630px;color:#0B4FC4;">Export traceability matrix</div><div class="r" style="left:3282px;top:436px;width:212px;height:48px;background:#EBECF0;border-radius:5px;"></div><div class="t w4" style="left:3298.00px;top:445px;font:400 22.19px/29px 'Liberation Sans';letter-spacing:0.480px;color:#344563;">Insert as a macro</div><div class="r" style="left:482px;top:499px;width:3012px;height:72px;background:#F2F2F3;border-radius:0px;"></div><div class="r" style="left:482px;top:571px;width:3012px;height:3px;background:#DFE1E6;border-radius:0px;"></div><div class="r" style="left:482px;top:499px;width:3012px;height:1px;background:#CFD3D8;border-radius:0px;"></div><div class="r" style="left:482px;top:1649px;width:3012px;height:1px;background:#CFD3D8;border-radius:0px;"></div><div class="r" style="left:482px;top:499px;width:1px;height:1151px;background:#CFD3D8;border-radius:0px;"></div><div class="r" style="left:892px;top:499px;width:1px;height:1151px;background:#CFD3D8;border-radius:0px;"></div><div class="r" style="left:1158px;top:499px;width:1px;height:1151px;background:#CFD3D8;border-radius:0px;"></div><div class="r" style="left:1448px;top:499px;width:1px;height:1151px;background:#CFD3D8;border-radius:0px;"></div><div class="r" style="left:1774px;top:499px;width:1px;height:1151px;background:#CFD3D8;border-radius:0px;"></div><div class="r" style="left:2462px;top:499px;width:1px;height:1151px;background:#CFD3D8;border-radius:0px;"></div><div class="r" style="left:2909px;top:499px;width:1px;height:1151px;background:#CFD3D8;border-radius:0px;"></div><div class="r" style="left:3493px;top:499px;width:1px;height:1151px;background:#CFD3D8;border-radius:0px;"></div><div class="t" style="left:498.38px;top:525px;font:700 18.63px/24px 'Liberation Sans';letter-spacing:0.647px;color:#6B778C;">Requirement</div><div class="t" style="left:908.28px;top:525px;font:700 18.63px/24px 'Liberation Sans';letter-spacing:1.218px;color:#6B778C;">F.R.</div><div class="t" style="left:1175.11px;top:525px;font:700 18.63px/24px 'Liberation Sans';letter-spacing:1.007px;color:#6B778C;">T.R.</div><div class="t" style="left:1464.81px;top:525px;font:700 18.63px/24px 'Liberation Sans';letter-spacing:0.724px;color:#6B778C;">Jira</div><div class="t" style="left:1791.23px;top:525px;font:700 18.63px/24px 'Liberation Sans';letter-spacing:0.644px;color:#6B778C;">Zephyr test cases</div><div class="t" style="left:2478.58px;top:525px;font:700 18.63px/24px 'Liberation Sans';letter-spacing:0.648px;color:#6B778C;">Last test result</div><div class="t" style="left:2926.33px;top:525px;font:700 18.63px/24px 'Liberation Sans';letter-spacing:0.687px;color:#6B778C;">Zephyr test case status</div><div class="r" style="left:893px;top:630px;width:265px;height:1px;background:#E2E4E9;border-radius:0px;"></div><div class="r" style="left:1159px;top:630px;width:289px;height:1px;background:#E2E4E9;border-radius:0px;"></div><div class="r" style="left:1449px;top:630px;width:2044px;height:1px;background:#E2E4E9;border-radius:0px;"></div><div class="r" style="left:893px;top:685px;width:265px;height:1px;background:#E2E4E9;border-radius:0px;"></div><div class="r" style="left:1159px;top:685px;width:289px;height:1px;background:#E2E4E9;border-radius:0px;"></div><div class="r" style="left:1449px;top:685px;width:2044px;height:1px;background:#E2E4E9;border-radius:0px;"></div><div class="r" style="left:483px;top:742px;width:409px;height:1px;background:#E2E4E9;border-radius:0px;"></div><div class="r" style="left:893px;top:742px;width:265px;height:1px;background:#E2E4E9;border-radius:0px;"></div><div class="r" style="left:1159px;top:742px;width:289px;height:1px;background:#E2E4E9;border-radius:0px;"></div><div class="r" style="left:1449px;top:742px;width:2044px;height:1px;background:#E2E4E9;border-radius:0px;"></div><div class="r" style="left:1449px;top:799px;width:2044px;height:1px;background:#E2E4E9;border-radius:0px;"></div><div class="r" style="left:1159px;top:856px;width:289px;height:1px;background:#E2E4E9;border-radius:0px;"></div><div class="r" style="left:1449px;top:856px;width:2044px;height:1px;background:#E2E4E9;border-radius:0px;"></div><div class="r" style="left:1159px;top:911px;width:289px;height:1px;background:#E2E4E9;border-radius:0px;"></div><div class="r" style="left:1449px;top:911px;width:2044px;height:1px;background:#E2E4E9;border-radius:0px;"></div><div class="r" style="left:893px;top:967px;width:265px;height:1px;background:#E2E4E9;border-radius:0px;"></div><div class="r" style="left:1159px;top:967px;width:289px;height:1px;background:#E2E4E9;border-radius:0px;"></div><div class="r" style="left:1449px;top:967px;width:2044px;height:1px;background:#E2E4E9;border-radius:0px;"></div><div class="r" style="left:1449px;top:1024px;width:2044px;height:1px;background:#E2E4E9;border-radius:0px;"></div><div class="r" style="left:1159px;top:1081px;width:289px;height:1px;background:#E2E4E9;border-radius:0px;"></div><div class="r" style="left:1449px;top:1081px;width:2044px;height:1px;background:#E2E4E9;border-radius:0px;"></div><div class="r" style="left:1159px;top:1138px;width:289px;height:1px;background:#E2E4E9;border-radius:0px;"></div><div class="r" style="left:1449px;top:1138px;width:2044px;height:1px;background:#E2E4E9;border-radius:0px;"></div><div class="r" style="left:483px;top:1195px;width:409px;height:1px;background:#E2E4E9;border-radius:0px;"></div><div class="r" style="left:893px;top:1195px;width:265px;height:1px;background:#E2E4E9;border-radius:0px;"></div><div class="r" style="left:1159px;top:1195px;width:289px;height:1px;background:#E2E4E9;border-radius:0px;"></div><div class="r" style="left:1449px;top:1195px;width:2044px;height:1px;background:#E2E4E9;border-radius:0px;"></div><div class="r" style="left:1449px;top:1251px;width:2044px;height:1px;background:#E2E4E9;border-radius:0px;"></div><div class="r" style="left:893px;top:1308px;width:265px;height:1px;background:#E2E4E9;border-radius:0px;"></div><div class="r" style="left:1159px;top:1308px;width:289px;height:1px;background:#E2E4E9;border-radius:0px;"></div><div class="r" style="left:1449px;top:1308px;width:2044px;height:1px;background:#E2E4E9;border-radius:0px;"></div><div class="r" style="left:1449px;top:1365px;width:2044px;height:1px;background:#E2E4E9;border-radius:0px;"></div><div class="r" style="left:1159px;top:1422px;width:289px;height:1px;background:#E2E4E9;border-radius:0px;"></div><div class="r" style="left:1449px;top:1422px;width:2044px;height:1px;background:#E2E4E9;border-radius:0px;"></div><div class="r" style="left:1159px;top:1479px;width:289px;height:1px;background:#E2E4E9;border-radius:0px;"></div><div class="r" style="left:1449px;top:1479px;width:2044px;height:1px;background:#E2E4E9;border-radius:0px;"></div><div class="r" style="left:893px;top:1536px;width:265px;height:1px;background:#E2E4E9;border-radius:0px;"></div><div class="r" style="left:1159px;top:1536px;width:289px;height:1px;background:#E2E4E9;border-radius:0px;"></div><div class="r" style="left:1449px;top:1536px;width:2044px;height:1px;background:#E2E4E9;border-radius:0px;"></div><div class="r" style="left:1159px;top:1592px;width:289px;height:1px;background:#E2E4E9;border-radius:0px;"></div><div class="r" style="left:1449px;top:1592px;width:2044px;height:1px;background:#E2E4E9;border-radius:0px;"></div><svg class="s" style="left:506px;top:593px;" width="12" height="15" viewBox="0 0 12 15"><path d="M3,2.5 L8.5,7.3 L3,12.2" fill="none" stroke="#172B4D" stroke-width="2.8" stroke-linecap="round" stroke-linejoin="round"/></svg><div class="r" style="left:533px;top:587px;width:82px;height:28px;background:#F1F1F2;border-radius:5px;"></div><div class="t w4" style="left:540.89px;top:587px;font:400 22.62px/29px 'Liberation Sans';letter-spacing:0.161px;color:#0B4FC4;">BR-01</div><svg class="s" style="left:506px;top:762px;" width="12" height="15" viewBox="0 0 12 15"><path d="M3,2.5 L8.5,7.3 L3,12.2" fill="none" stroke="#172B4D" stroke-width="2.8" stroke-linecap="round" stroke-linejoin="round"/></svg><div class="r" style="left:533px;top:756px;width:85px;height:28px;background:#F1F1F2;border-radius:5px;"></div><div class="t w4" style="left:540.89px;top:756px;font:400 22.62px/29px 'Liberation Sans';letter-spacing:0.986px;color:#0B4FC4;">BR-02</div><svg class="s" style="left:506px;top:1215px;" width="12" height="15" viewBox="0 0 12 15"><path d="M3,2.5 L8.5,7.3 L3,12.2" fill="none" stroke="#172B4D" stroke-width="2.8" stroke-linecap="round" stroke-linejoin="round"/></svg><div class="r" style="left:533px;top:1209px;width:85px;height:28px;background:#F1F1F2;border-radius:5px;"></div><div class="t w4" style="left:540.89px;top:1209px;font:400 22.62px/29px 'Liberation Sans';letter-spacing:0.930px;color:#0B4FC4;">BR-03</div><div class="r" style="left:909px;top:587px;width:82px;height:28px;background:#F1F1F2;border-radius:5px;"></div><div class="t w4" style="left:917.19px;top:587px;font:400 22.62px/29px 'Liberation Sans';letter-spacing:0.479px;color:#0B4FC4;">FN-01</div><div class="r" style="left:909px;top:644px;width:86px;height:28px;background:#F1F1F2;border-radius:5px;"></div><div class="t w4" style="left:917.19px;top:644px;font:400 22.62px/29px 'Liberation Sans';letter-spacing:1.291px;color:#0B4FC4;">FN-04</div><div class="r" style="left:909px;top:699px;width:85px;height:28px;background:#F1F1F2;border-radius:5px;"></div><div class="t w4" style="left:917.19px;top:699px;font:400 22.62px/29px 'Liberation Sans';letter-spacing:1.172px;color:#0B4FC4;">FN-05</div><div class="r" style="left:909px;top:756px;width:85px;height:28px;background:#F1F1F2;border-radius:5px;"></div><div class="t w4" style="left:917.19px;top:756px;font:400 22.62px/29px 'Liberation Sans';letter-spacing:1.304px;color:#0B4FC4;">FN-02</div><div class="r" style="left:909px;top:981px;width:85px;height:28px;background:#F1F1F2;border-radius:5px;"></div><div class="t w4" style="left:917.19px;top:981px;font:400 22.62px/29px 'Liberation Sans';letter-spacing:1.247px;color:#0B4FC4;">FN-06</div><div class="r" style="left:909px;top:1209px;width:85px;height:28px;background:#F1F1F2;border-radius:5px;"></div><div class="t w4" style="left:917.19px;top:1209px;font:400 22.62px/29px 'Liberation Sans';letter-spacing:1.247px;color:#0B4FC4;">FN-03</div><div class="r" style="left:909px;top:1322px;width:85px;height:28px;background:#F1F1F2;border-radius:5px;"></div><div class="t w4" style="left:917.19px;top:1322px;font:400 22.62px/29px 'Liberation Sans';letter-spacing:1.247px;color:#0B4FC4;">FN-06</div><div class="r" style="left:909px;top:1550px;width:85px;height:28px;background:#F1F1F2;border-radius:5px;"></div><div class="t w4" style="left:917.19px;top:1550px;font:400 22.62px/29px 'Liberation Sans';letter-spacing:1.304px;color:#0B4FC4;">FN-07</div><div class="r" style="left:1175px;top:587px;width:126px;height:28px;background:#F1F1F2;border-radius:5px;"></div><div class="t w4" style="left:1184.55px;top:587px;font:400 22.62px/29px 'Liberation Sans';letter-spacing:0.066px;color:#0B4FC4;">TECH-001</div><div class="r" style="left:1175px;top:699px;width:130px;height:28px;background:#F1F1F2;border-radius:5px;"></div><div class="t w4" style="left:1184.55px;top:699px;font:400 22.62px/29px 'Liberation Sans';letter-spacing:0.530px;color:#0B4FC4;">TECH-004</div><div class="r" style="left:1175px;top:756px;width:129px;height:28px;background:#F1F1F2;border-radius:5px;"></div><div class="t w4" style="left:1184.55px;top:756px;font:400 22.62px/29px 'Liberation Sans';letter-spacing:0.519px;color:#0B4FC4;">TECH-003</div><div class="r" style="left:1175px;top:870px;width:129px;height:28px;background:#F1F1F2;border-radius:5px;"></div><div class="t w4" style="left:1184.55px;top:870px;font:400 22.62px/29px 'Liberation Sans';letter-spacing:0.551px;color:#0B4FC4;">TECH-007</div><div class="r" style="left:1175px;top:925px;width:129px;height:28px;background:#F1F1F2;border-radius:5px;"></div><div class="t w4" style="left:1184.55px;top:925px;font:400 22.62px/29px 'Liberation Sans';letter-spacing:0.519px;color:#0B4FC4;">TECH-008</div><div class="r" style="left:1175px;top:981px;width:129px;height:28px;background:#F1F1F2;border-radius:5px;"></div><div class="t w4" style="left:1184.55px;top:981px;font:400 22.62px/29px 'Liberation Sans';letter-spacing:0.519px;color:#0B4FC4;">TECH-003</div><div class="r" style="left:1175px;top:1095px;width:129px;height:28px;background:#F1F1F2;border-radius:5px;"></div><div class="t w4" style="left:1184.55px;top:1095px;font:400 22.62px/29px 'Liberation Sans';letter-spacing:0.519px;color:#0B4FC4;">TECH-005</div><div class="r" style="left:1175px;top:1152px;width:129px;height:28px;background:#F1F1F2;border-radius:5px;"></div><div class="t w4" style="left:1184.55px;top:1152px;font:400 22.62px/29px 'Liberation Sans';letter-spacing:0.519px;color:#0B4FC4;">TECH-006</div><div class="r" style="left:1175px;top:1209px;width:129px;height:28px;background:#F1F1F2;border-radius:5px;"></div><div class="t w4" style="left:1184.55px;top:1209px;font:400 22.62px/29px 'Liberation Sans';letter-spacing:0.551px;color:#0B4FC4;">TECH-002</div><div class="r" style="left:1175px;top:1322px;width:129px;height:28px;background:#F1F1F2;border-radius:5px;"></div><div class="t w4" style="left:1184.55px;top:1322px;font:400 22.62px/29px 'Liberation Sans';letter-spacing:0.519px;color:#0B4FC4;">TECH-003</div><div class="r" style="left:1175px;top:1436px;width:129px;height:28px;background:#F1F1F2;border-radius:5px;"></div><div class="t w4" style="left:1184.55px;top:1436px;font:400 22.62px/29px 'Liberation Sans';letter-spacing:0.519px;color:#0B4FC4;">TECH-005</div><div class="r" style="left:1175px;top:1493px;width:129px;height:28px;background:#F1F1F2;border-radius:5px;"></div><div class="t w4" style="left:1184.55px;top:1493px;font:400 22.62px/29px 'Liberation Sans';letter-spacing:0.519px;color:#0B4FC4;">TECH-006</div><div class="r" style="left:1175px;top:1550px;width:129px;height:28px;background:#F1F1F2;border-radius:5px;"></div><div class="t w4" style="left:1184.55px;top:1550px;font:400 22.62px/29px 'Liberation Sans';letter-spacing:0.551px;color:#0B4FC4;">TECH-009</div><div class="r" style="left:1175px;top:1606px;width:129px;height:28px;background:#F1F1F2;border-radius:5px;"></div><div class="t w4" style="left:1184.55px;top:1606px;font:400 22.62px/29px 'Liberation Sans';letter-spacing:0.519px;color:#0B4FC4;">TECH-010</div><div class="r" style="left:1465px;top:584px;width:154px;height:34px;background:#EBECF0;border-radius:5px;"></div><svg class="s" style="left:1470px;top:588px;" width="26" height="26" viewBox="0 0 26 26"><rect width="26" height="26" rx="4" fill="#4A86EE"/><rect x="5.6" y="5.6" width="8.6" height="8.6" fill="none" stroke="#fff" stroke-width="2.6"/><rect x="10.4" y="10.4" width="10.5" height="10.5" rx="1.2" fill="#fff"/></svg><div class="t w4" style="left:1503.80px;top:588px;font:400 22.62px/29px 'Liberation Sans';letter-spacing:-0.641px;color:#0B4FC4;">SCRUM-11</div><div class="r" style="left:1465px;top:696px;width:158px;height:34px;background:#EBECF0;border-radius:5px;"></div><svg class="s" style="left:1470px;top:700px;" width="26" height="26" viewBox="0 0 26 26"><rect width="26" height="26" rx="4" fill="#63AB7E"/><path d="M7.8,6.5 H18.2 V19.8 L13,15.2 L7.8,19.8 Z" fill="#fff"/></svg><div class="t w4" style="left:1503.80px;top:700px;font:400 22.62px/29px 'Liberation Sans';letter-spacing:-0.274px;color:#0B4FC4;">SCRUM-14</div><div class="r" style="left:1465px;top:753px;width:158px;height:34px;background:#EBECF0;border-radius:5px;"></div><svg class="s" style="left:1470px;top:757px;" width="26" height="26" viewBox="0 0 26 26"><rect width="26" height="26" rx="4" fill="#4A86EE"/><rect x="5.6" y="5.6" width="8.6" height="8.6" fill="none" stroke="#fff" stroke-width="2.6"/><rect x="10.4" y="10.4" width="10.5" height="10.5" rx="1.2" fill="#fff"/></svg><div class="t w4" style="left:1503.80px;top:757px;font:400 22.62px/29px 'Liberation Sans';letter-spacing:-0.324px;color:#0B4FC4;">SCRUM-12</div><div class="r" style="left:1465px;top:810px;width:158px;height:34px;background:#EBECF0;border-radius:5px;"></div><svg class="s" style="left:1470px;top:814px;" width="26" height="26" viewBox="0 0 26 26"><rect width="26" height="26" rx="4" fill="#E5603F"/><circle cx="13" cy="13" r="6" fill="#fff"/></svg><div class="t w4" style="left:1503.80px;top:814px;font:400 22.62px/29px 'Liberation Sans';letter-spacing:-0.242px;color:#0B4FC4;">SCRUM-13</div><div class="r" style="left:1465px;top:978px;width:158px;height:34px;background:#EBECF0;border-radius:5px;"></div><svg class="s" style="left:1470px;top:982px;" width="26" height="26" viewBox="0 0 26 26"><rect width="26" height="26" rx="4" fill="#4A86EE"/><rect x="5.6" y="5.6" width="8.6" height="8.6" fill="none" stroke="#fff" stroke-width="2.6"/><rect x="10.4" y="10.4" width="10.5" height="10.5" rx="1.2" fill="#fff"/></svg><div class="t w4" style="left:1503.80px;top:982px;font:400 22.62px/29px 'Liberation Sans';letter-spacing:-0.324px;color:#0B4FC4;">SCRUM-12</div><div class="r" style="left:1465px;top:1035px;width:158px;height:34px;background:#EBECF0;border-radius:5px;"></div><svg class="s" style="left:1470px;top:1039px;" width="26" height="26" viewBox="0 0 26 26"><rect width="26" height="26" rx="4" fill="#E5603F"/><circle cx="13" cy="13" r="6" fill="#fff"/></svg><div class="t w4" style="left:1503.80px;top:1039px;font:400 22.62px/29px 'Liberation Sans';letter-spacing:-0.242px;color:#0B4FC4;">SCRUM-13</div><div class="r" style="left:1465px;top:1092px;width:158px;height:34px;background:#EBECF0;border-radius:5px;"></div><svg class="s" style="left:1470px;top:1096px;" width="26" height="26" viewBox="0 0 26 26"><rect width="26" height="26" rx="4" fill="#63AB7E"/><path d="M7.8,6.5 H18.2 V19.8 L13,15.2 L7.8,19.8 Z" fill="#fff"/></svg><div class="t w4" style="left:1503.80px;top:1096px;font:400 22.62px/29px 'Liberation Sans';letter-spacing:-0.274px;color:#0B4FC4;">SCRUM-14</div><div class="r" style="left:1465px;top:1149px;width:158px;height:34px;background:#EBECF0;border-radius:5px;"></div><svg class="s" style="left:1470px;top:1153px;" width="26" height="26" viewBox="0 0 26 26"><rect width="26" height="26" rx="4" fill="#63AB7E"/><path d="M7.8,6.5 H18.2 V19.8 L13,15.2 L7.8,19.8 Z" fill="#fff"/></svg><div class="t w4" style="left:1503.80px;top:1153px;font:400 22.62px/29px 'Liberation Sans';letter-spacing:-0.270px;color:#0B4FC4;">SCRUM-10</div><div class="r" style="left:1465px;top:1206px;width:158px;height:34px;background:#EBECF0;border-radius:5px;"></div><svg class="s" style="left:1470px;top:1210px;" width="26" height="26" viewBox="0 0 26 26"><rect width="26" height="26" rx="4" fill="#63AB7E"/><path d="M7.8,6.5 H18.2 V19.8 L13,15.2 L7.8,19.8 Z" fill="#fff"/></svg><div class="t w4" style="left:1503.80px;top:1210px;font:400 22.62px/29px 'Liberation Sans';letter-spacing:-0.270px;color:#0B4FC4;">SCRUM-10</div><div class="r" style="left:1465px;top:1262px;width:158px;height:34px;background:#EBECF0;border-radius:5px;"></div><svg class="s" style="left:1470px;top:1266px;" width="26" height="26" viewBox="0 0 26 26"><rect width="26" height="26" rx="4" fill="#4A86EE"/><rect x="5.6" y="5.6" width="8.6" height="8.6" fill="none" stroke="#fff" stroke-width="2.6"/><rect x="10.4" y="10.4" width="10.5" height="10.5" rx="1.2" fill="#fff"/></svg><div class="t w4" style="left:1503.80px;top:1266px;font:400 22.62px/29px 'Liberation Sans';letter-spacing:-0.324px;color:#0B4FC4;">SCRUM-12</div><div class="r" style="left:1465px;top:1319px;width:158px;height:34px;background:#EBECF0;border-radius:5px;"></div><svg class="s" style="left:1470px;top:1323px;" width="26" height="26" viewBox="0 0 26 26"><rect width="26" height="26" rx="4" fill="#4A86EE"/><rect x="5.6" y="5.6" width="8.6" height="8.6" fill="none" stroke="#fff" stroke-width="2.6"/><rect x="10.4" y="10.4" width="10.5" height="10.5" rx="1.2" fill="#fff"/></svg><div class="t w4" style="left:1503.80px;top:1323px;font:400 22.62px/29px 'Liberation Sans';letter-spacing:-0.324px;color:#0B4FC4;">SCRUM-12</div><div class="r" style="left:1465px;top:1376px;width:158px;height:34px;background:#EBECF0;border-radius:5px;"></div><svg class="s" style="left:1470px;top:1380px;" width="26" height="26" viewBox="0 0 26 26"><rect width="26" height="26" rx="4" fill="#E5603F"/><circle cx="13" cy="13" r="6" fill="#fff"/></svg><div class="t w4" style="left:1503.80px;top:1380px;font:400 22.62px/29px 'Liberation Sans';letter-spacing:-0.242px;color:#0B4FC4;">SCRUM-13</div><div class="r" style="left:1465px;top:1433px;width:158px;height:34px;background:#EBECF0;border-radius:5px;"></div><svg class="s" style="left:1470px;top:1437px;" width="26" height="26" viewBox="0 0 26 26"><rect width="26" height="26" rx="4" fill="#63AB7E"/><path d="M7.8,6.5 H18.2 V19.8 L13,15.2 L7.8,19.8 Z" fill="#fff"/></svg><div class="t w4" style="left:1503.80px;top:1437px;font:400 22.62px/29px 'Liberation Sans';letter-spacing:-0.274px;color:#0B4FC4;">SCRUM-14</div><div class="r" style="left:1465px;top:1490px;width:158px;height:34px;background:#EBECF0;border-radius:5px;"></div><svg class="s" style="left:1470px;top:1494px;" width="26" height="26" viewBox="0 0 26 26"><rect width="26" height="26" rx="4" fill="#63AB7E"/><path d="M7.8,6.5 H18.2 V19.8 L13,15.2 L7.8,19.8 Z" fill="#fff"/></svg><div class="t w4" style="left:1503.80px;top:1494px;font:400 22.62px/29px 'Liberation Sans';letter-spacing:-0.270px;color:#0B4FC4;">SCRUM-10</div><div class="r" style="left:1465px;top:1603px;width:154px;height:34px;background:#EBECF0;border-radius:5px;"></div><svg class="s" style="left:1470px;top:1607px;" width="26" height="26" viewBox="0 0 26 26"><rect width="26" height="26" rx="4" fill="#4A86EE"/><rect x="5.6" y="5.6" width="8.6" height="8.6" fill="none" stroke="#fff" stroke-width="2.6"/><rect x="10.4" y="10.4" width="10.5" height="10.5" rx="1.2" fill="#fff"/></svg><div class="t w4" style="left:1503.80px;top:1607px;font:400 22.62px/29px 'Liberation Sans';letter-spacing:-0.641px;color:#0B4FC4;">SCRUM-11</div><div class="t w4" style="left:1790.70px;top:700px;font:400 22.62px/29px 'Liberation Sans';letter-spacing:-0.629px;color:#0B4FC4;">SCRUM-T1</div><div class="t w4" style="left:1910.10px;top:700px;font:400 22.62px/29px 'Liberation Sans';letter-spacing:0.287px;color:#172B4D;">- Test case 1 (v2.0) - V.2</div><div class="t w4" style="left:2477.86px;top:700px;font:400 22.62px/29px 'Liberation Sans';letter-spacing:0.217px;color:#172B4D;">In Progress</div><div class="t w4" style="left:2927.20px;top:700px;font:400 22.62px/29px 'Liberation Sans';letter-spacing:0.322px;color:#172B4D;">Approved</div><div class="t w4" style="left:1790.70px;top:1096px;font:400 22.62px/29px 'Liberation Sans';letter-spacing:-0.629px;color:#0B4FC4;">SCRUM-T1</div><div class="t w4" style="left:1910.10px;top:1096px;font:400 22.62px/29px 'Liberation Sans';letter-spacing:0.287px;color:#172B4D;">- Test case 1 (v2.0) - V.2</div><div class="t w4" style="left:2477.86px;top:1096px;font:400 22.62px/29px 'Liberation Sans';letter-spacing:0.217px;color:#172B4D;">In Progress</div><div class="t w4" style="left:2927.20px;top:1096px;font:400 22.62px/29px 'Liberation Sans';letter-spacing:0.322px;color:#172B4D;">Approved</div><div class="t w4" style="left:1790.70px;top:1436px;font:400 22.62px/29px 'Liberation Sans';letter-spacing:-0.629px;color:#0B4FC4;">SCRUM-T1</div><div class="t w4" style="left:1910.10px;top:1436px;font:400 22.62px/29px 'Liberation Sans';letter-spacing:0.287px;color:#172B4D;">- Test case 1 (v2.0) - V.2</div><div class="t w4" style="left:2477.86px;top:1436px;font:400 22.62px/29px 'Liberation Sans';letter-spacing:0.217px;color:#172B4D;">In Progress</div><div class="t w4" style="left:2927.20px;top:1436px;font:400 22.62px/29px 'Liberation Sans';letter-spacing:0.322px;color:#172B4D;">Approved</div><div class="t w4" style="left:1790.70px;top:1152px;font:400 22.62px/29px 'Liberation Sans';letter-spacing:-0.186px;color:#0B4FC4;">SCRUM-T2</div><div class="t w4" style="left:1913.10px;top:1152px;font:400 22.62px/29px 'Liberation Sans';letter-spacing:0.220px;color:#172B4D;">- Test case 2 - V.1</div><div class="t w4" style="left:2478.69px;top:1152px;font:400 22.62px/29px 'Liberation Sans';letter-spacing:-0.231px;color:#172B4D;">Pass</div><div class="t w4" style="left:2925.19px;top:1152px;font:400 22.62px/29px 'Liberation Sans';letter-spacing:1.012px;color:#172B4D;">Draft</div><div class="t w4" style="left:1790.70px;top:1210px;font:400 22.62px/29px 'Liberation Sans';letter-spacing:-0.186px;color:#0B4FC4;">SCRUM-T2</div><div class="t w4" style="left:1913.10px;top:1210px;font:400 22.62px/29px 'Liberation Sans';letter-spacing:0.220px;color:#172B4D;">- Test case 2 - V.1</div><div class="t w4" style="left:2478.69px;top:1210px;font:400 22.62px/29px 'Liberation Sans';letter-spacing:-0.231px;color:#172B4D;">Pass</div><div class="t w4" style="left:2925.19px;top:1210px;font:400 22.62px/29px 'Liberation Sans';letter-spacing:1.012px;color:#172B4D;">Draft</div><div class="t w4" style="left:1790.70px;top:1494px;font:400 22.62px/29px 'Liberation Sans';letter-spacing:-0.186px;color:#0B4FC4;">SCRUM-T2</div><div class="t w4" style="left:1913.10px;top:1494px;font:400 22.62px/29px 'Liberation Sans';letter-spacing:0.220px;color:#172B4D;">- Test case 2 - V.1</div><div class="t w4" style="left:2478.69px;top:1494px;font:400 22.62px/29px 'Liberation Sans';letter-spacing:-0.231px;color:#172B4D;">Pass</div><div class="t w4" style="left:2925.19px;top:1494px;font:400 22.62px/29px 'Liberation Sans';letter-spacing:1.012px;color:#172B4D;">Draft</div><div class="r" style="left:453px;top:997px;width:3px;height:19px;background:#C1C7D0;border-radius:2px;"></div><div class="r" style="left:458px;top:997px;width:3px;height:19px;background:#C1C7D0;border-radius:2px;"></div><div class="t w4" style="left:1645.07px;top:1718px;font:400 20.34px/26px 'Liberation Sans';letter-spacing:-0.268px;color:#5E6C84;">Powered by Atlassian Confluence 7.19.1</div><div class="r" style="left:2018px;top:1731px;width:3px;height:3px;background:#5E6C84;border-radius:2px;"></div><div class="t w4" style="left:2037.17px;top:1718px;font:400 20.34px/26px 'Liberation Sans';letter-spacing:0.060px;color:#5E6C84;">Report a bug</div><div class="r" style="left:2172.5px;top:1731px;width:3.0px;height:3px;background:#5E6C84;border-radius:2px;"></div><div class="t w4" style="left:2193.70px;top:1718px;font:400 20.34px/26px 'Liberation Sans';letter-spacing:-0.242px;color:#5E6C84;">Atlassian News</div><svg class="s" style="left:1887px;top:1789px;" width="25" height="25" viewBox="0 0 25 25"><path d="M7.3,12.3 C6.9,11.8 6.2,11.9 5.9,12.5 L0.1,24.1 C-0.1,24.6 0.2,25 0.7,25 L8.8,25 C9.1,25 9.3,24.8 9.5,24.6 C11.2,21 10.2,15.6 7.3,12.3 Z" fill="#7A869A"/><path d="M11.8,0.6 C8.9,5.2 8.7,10.3 10.6,14.2 L15.5,24.6 C15.7,24.8 15.9,25 16.2,25 L24.3,25 C24.8,25 25.1,24.6 24.9,24.1 L13,0.6 C12.8,0 12.1,0 11.8,0.6 Z" fill="#7A869A"/></svg><div class="t" style="left:1921.63px;top:1786px;font:700 28.45px/37px 'Liberation Sans';letter-spacing:1.257px;color:#505F79;-webkit-text-stroke:0.6px currentColor;">ATLASSIAN</div></body></html>
